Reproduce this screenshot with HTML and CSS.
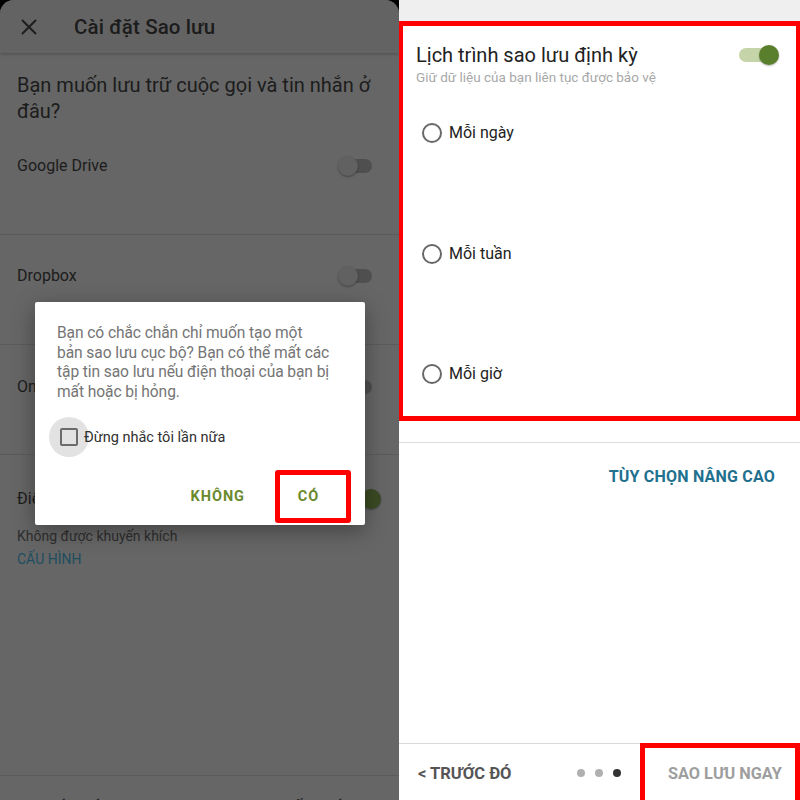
FILE: index.html
```html
<!DOCTYPE html>
<html lang="vi">
<head>
<meta charset="utf-8">
<title>Cài đặt Sao lưu</title>
<link rel="stylesheet" href="styles.css">
</head>
<body>
<div class="screen">
  <section class="left">
    <header class="l-head">
      <svg class="close" width="24" height="24" viewBox="0 0 24 24"><path d="M5 5 L19 19 M19 5 L5 19" stroke="#1e1e1e" stroke-width="2" fill="none"/></svg>
      <h1 class="l-title">Cài đặt Sao lưu</h1>
    </header>
    <p class="question">Bạn muốn lưu trữ cuộc gọi và tin nhắn ở đâu?</p>
    <div class="opt">
      <span>Google Drive</span>
      <span class="sw"><span class="knob"></span></span>
    </div>
    <div class="opt">
      <span>Dropbox</span>
      <span class="sw"><span class="knob"></span></span>
    </div>
    <div class="opt opt-od">
      <span>OneDrive</span>
      <span class="sw"><span class="knob"></span></span>
    </div>
    <div class="opt opt-phone">
      <div class="phone-line">
        <span>Điện thoại</span>
        <span class="sw sw-on"><span class="knob"></span></span>
      </div>
      <div class="phone-sub">Không được khuyến khích</div>
      <div class="phone-link">CẤU HÌNH</div>
    </div>
    <div class="l-foot">
      <span>&lt; TRƯỚC ĐÓ</span>
      <span>KẾT THÚC</span>
    </div>

    <div class="dialog">
      <p class="d-text">Bạn có chắc chắn chỉ muốn tạo một<br>bản sao lưu cục bộ? Bạn có thể mất các<br>tập tin sao lưu nếu điện thoại của bạn bị<br>mất hoặc bị hỏng.</p>
      <div class="d-check">
        <span class="ripple"><span class="cbox"></span></span>
        <span class="d-label">Đừng nhắc tôi lần nữa</span>
      </div>
      <div class="d-actions">
        <span class="d-btn">KHÔNG</span>
        <span class="d-btn d-yes">CÓ</span>
      </div>
    </div>
  </section>

  <section class="right">
    <div class="r-top"></div>
    <div class="r-box">
      <div class="r-head">
        <div>
          <div class="r-title">Lịch trình sao lưu định kỳ</div>
          <div class="r-sub">Giữ dữ liệu của bạn liên tục được bảo vệ</div>
        </div>
        <span class="sw2"><span class="knob2"></span></span>
      </div>
      <div class="radios">
        <div class="radio r1"><span class="circ"></span>Mỗi ngày</div>
        <div class="radio r2"><span class="circ"></span>Mỗi tuần</div>
        <div class="radio r3"><span class="circ"></span>Mỗi giờ</div>
      </div>
    </div>
    <div class="r-gap"></div>
    <div class="r-mid">
      <span class="adv">TÙY CHỌN NÂNG CAO</span>
    </div>
    <div class="r-bar">
      <span class="prev">&lt; TRƯỚC ĐÓ</span>
      <span class="dots"><i></i><i></i><i class="cur"></i></span>
      <span class="now">SAO LƯU NGAY</span>
    </div>
  </section>
</div>
</body>
</html>
```
FILE: styles.css
```css
* { box-sizing: border-box; margin: 0; padding: 0; }
html, body { width: 800px; height: 800px; overflow: hidden; background: #000; }
body { font-family: Roboto, "Noto Sans", "Liberation Sans", sans-serif; }

.screen { display: grid; grid-template-columns: 399px 401px; height: 800px; }

/* ---------- left (dimmed) ---------- */
.left {
  position: relative;
  background: #666666;
  border-radius: 14px 14px 0 0;
  overflow: hidden;
  display: flex;
  flex-direction: column;
  color: #1c1c1c;
}
.l-head {
  height: 53px;
  flex: none;
  display: flex;
  align-items: center;
  padding-left: 17px;
  background: #636363;
  box-shadow: 0 1px 3px rgba(0,0,0,.25);
}
.close { display: block; }
.l-title { font-size: 20.5px; font-weight: 500; margin-left: 33px; color: #1c1c1c; letter-spacing: .1px; }
.question {
  font-size: 20px; line-height: 26px;
  padding: 19px 17px 0;
  color: #1c1c1c;
}
.opt {
  display: flex; justify-content: space-between; align-items: center;
  padding: 31px 27px 57px 17px;
  border-bottom: 1px solid #5b5b5b;
  font-size: 16px; line-height: 22px;
}
.opt:nth-of-type(2) { padding-top: 30px; }
.opt-od { padding-bottom: 56px; }
.opt-phone { display: block; flex: 1; padding-top: 33px; }
.phone-line { display: flex; justify-content: space-between; align-items: center; line-height: 22px; }
.phone-sub { margin-top: 16px; font-size: 14px; line-height: 20px; color: #2e2e2e; }
.phone-link { margin-top: 3px; font-size: 14px; line-height: 20px; color: #1e4d60; }

.sw { position: relative; width: 32px; height: 14px; border-radius: 7px; background: #4f4f4f; }
.knob {
  position: absolute; left: -2px; top: -3px;
  width: 20px; height: 20px; border-radius: 50%;
  background: #616161; box-shadow: 0 1px 2px rgba(0,0,0,.35);
}
.sw-on { background: #4d5540; }
.sw-on .knob { left: auto; right: -9px; background: #3b4a23; }

.l-foot {
  height: 24px; flex: none;
  display: flex; justify-content: space-between;
  padding: 21px 45px 0 17px;
  font-size: 15px; font-weight: 700; line-height: 20px; color: #262626;
}

/* dialog */
.dialog {
  position: absolute; left: 35px; top: 302px;
  width: 330px; height: 223px;
  background: #fff; border-radius: 2px;
  box-shadow: 0 6px 22px rgba(0,0,0,.35);
  padding: 22px 8px 0 22px;
}
.d-text { font-size: 15.6px; line-height: 19.5px; color: #757575; white-space: nowrap; letter-spacing: -0.1px; }
.d-check { display: flex; align-items: center; margin-top: 15px; margin-left: -8px; }
.ripple {
  width: 40px; height: 40px; border-radius: 50%; background: #e2e2e2;
  display: flex; align-items: center; justify-content: center;
}
.cbox { width: 18px; height: 18px; border: 2px solid #6b6b6b; border-radius: 2px; }
.d-label { font-size: 14.5px; color: #303030; margin-left: -5px; }
.d-actions { display: flex; justify-content: flex-end; align-items: center; margin-top: 13px; margin-right: 12px; }
.d-btn { font-size: 14.5px; font-weight: 700; letter-spacing: 1px; color: #6a8a2e; }
.d-yes {
  margin-left: 30px;
  border: 5px solid #ff0000; border-radius: 3px;
  width: 76px; height: 53px;
  display: flex; align-items: center; justify-content: center;
  padding-right: 9px;
  margin-right: -6px;
}

/* ---------- right ---------- */
.right { background: #fff; display: flex; flex-direction: column; color: #212121; }
.r-top { height: 21px; flex: none; background: #efefef; }
.r-box {
  height: 400px; flex: none;
  border: 5px solid #ff0000; border-left-width: 4px; border-right-width: 4px;
  padding: 16px 15px 0 13px;
}
.r-head { display: flex; justify-content: space-between; align-items: flex-start; }
.r-title { font-size: 20px; line-height: 26px; color: #222; }
.r-sub { font-size: 13.5px; line-height: 18px; color: #a8a8a8; }
.sw2 { position: relative; width: 30px; height: 14px; border-radius: 7px; background: #c6d5a9; margin-top: 6px; margin-right: 12px; }
.knob2 {
  position: absolute; right: -10px; top: -3px;
  width: 20px; height: 20px; border-radius: 50%;
  background: #5a7f2c; box-shadow: 0 1px 2px rgba(0,0,0,.3);
}
.radios { padding-left: 6px; }
.radio { display: flex; align-items: center; font-size: 16px; line-height: 24px; color: #222; }
.r1 { margin-top: 35px; }
.r2 { margin-top: 97px; }
.r3 { margin-top: 96px; }
.circ { width: 20px; height: 20px; border: 2px solid #686868; border-radius: 50%; margin-right: 7px; }

.r-gap { height: 22px; flex: none; border-bottom: 1px solid #dcdcdc; }
.r-mid { flex: 1; display: flex; justify-content: flex-end; align-items: flex-start; padding: 24px 25px 0 0; }
.adv { font-size: 16px; font-weight: 700; line-height: 20px; color: #21708e; letter-spacing: .2px; }
.r-bar {
  height: 57px; flex: none;
  border-top: 1px solid #d9d9d9;
  display: flex; align-items: flex-start;
}
.prev { font-size: 16.5px; font-weight: 700; color: #555; padding: 20px 0 0 19px; line-height: 20px; width: 178px; }
.dots { display: flex; gap: 10px; padding-top: 25px; }
.dots i { width: 8px; height: 8px; border-radius: 50%; background: #b0b0b0; display: block; }
.dots i.cur { background: #333; }
.now {
  margin-left: auto;
  width: 160px; height: 66px; margin-top: -1px;
  border: 5px solid #ff0000; border-bottom: none;
  padding: 16px 0 0 23px;
  font-size: 16.3px; font-weight: 700; line-height: 20px; color: #9e9e9e;
}
```
